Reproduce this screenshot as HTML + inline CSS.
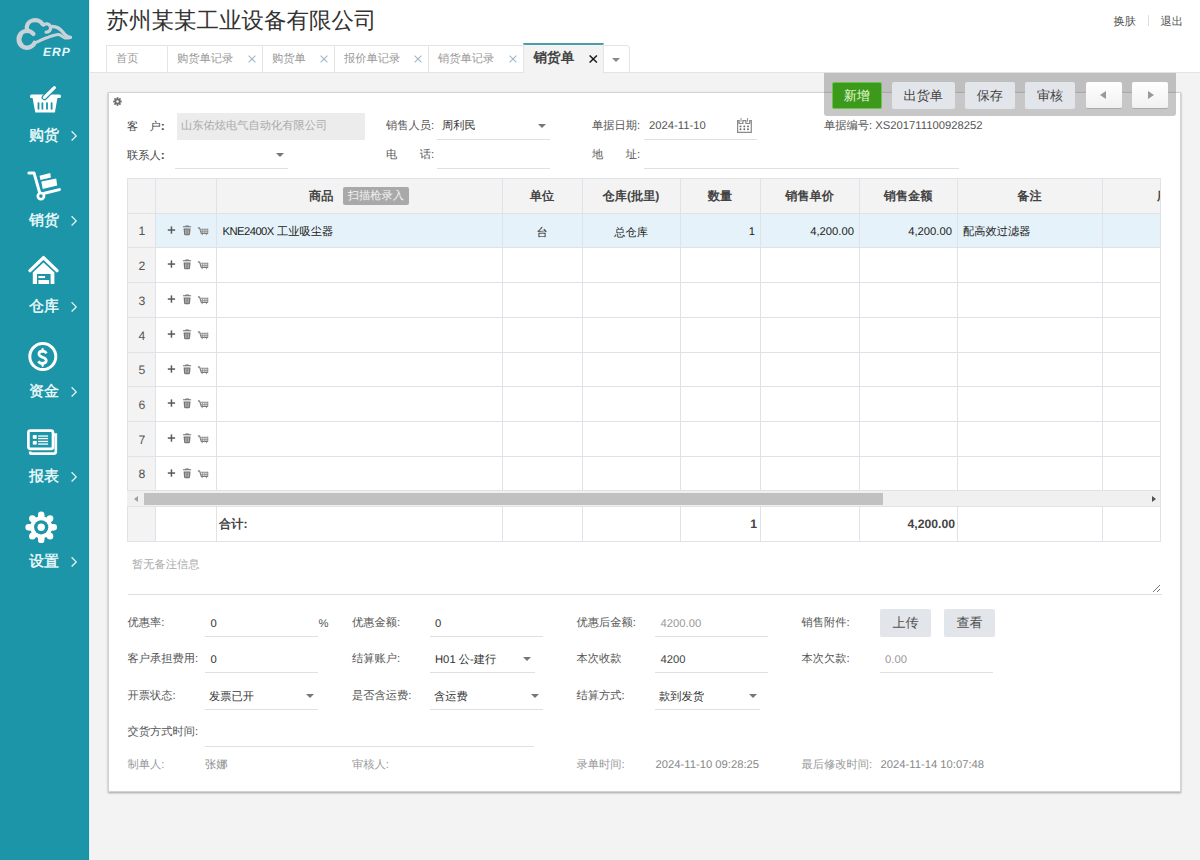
<!DOCTYPE html>
<html><head><meta charset="utf-8">
<style>
*{box-sizing:border-box;margin:0;padding:0}
html,body{width:1200px;height:860px;overflow:hidden}
body{text-rendering:geometricPrecision;position:relative;background:#f3f3f3;font-family:"Liberation Sans",sans-serif;font-size:11.25px;color:#333}
.a{position:absolute;white-space:nowrap}
#side{left:0;top:0;width:89px;height:860px;background:#1b95a7}
.mi{position:absolute;left:0;width:89px;color:#fff;font-size:15px}
.mi .lb{position:absolute;left:29px;line-height:16px;-webkit-text-stroke:0.35px #f4feff;color:#f4feff}
.mi .ar{position:absolute;left:70px;top:2px}
#hdr{left:89px;top:0;width:1111px;height:72px;background:#fff}
.tab{position:absolute;top:45px;height:27px;border:1px solid #e4e4e4;border-bottom:none;background:#fff;color:#999;font-size:11.25px;line-height:26px;padding-left:9px}
.tab .x{position:absolute;right:6.5px;top:8.5px}
#panel{left:108px;top:92px;width:1073px;height:700px;background:#fff;border:1px solid #d2d2d2;box-shadow:0 1px 2px rgba(0,0,0,.18)}
.lbl{position:absolute;color:#555;font-size:11.25px;line-height:14px}
.val{position:absolute;color:#333;font-size:11.25px;line-height:14px}
.ul{position:absolute;height:1px;background:#dde1e4}
.dd{position:absolute;width:0;height:0;border-left:4px solid transparent;border-right:4px solid transparent;border-top:4px solid #777}
.th{font-size:12.2px;font-weight:bold;color:#444;line-height:16px}
.td{font-size:11.25px;line-height:14px}
</style></head><body>

<div class="a" style="left:89px;top:0;width:1px;height:860px;background:#d2f7fb;z-index:2"></div>
<div id="side" class="a">
<div class="a" style="left:88px;top:0;width:1px;height:860px;background:#288b97"></div>
<svg width="89" height="600" viewBox="0 0 89 600" style="position:absolute;left:0;top:0">
 <g fill="none" stroke="#c8d2d8" stroke-linecap="round">
  <path d="M33.4,33.9 A8.4,8.4 0 1 0 34.6,42.85" stroke-width="4.3"/>
  <path d="M20.5,35 A8.4,8.4 0 0 0 21.5,45" stroke-width="4.6"/>
  <path d="M34.6,42.85 C40,41 44,38 48.4,37.2 C53,35.5 56,34.4 58.5,34.6 C61,34.8 63,37.6 65,37.9 C67,38.2 68.8,38 70.4,37.3" stroke-width="3"/>
  <path d="M27.2,29.4 A8.3,7.1 0 0 1 42.5,24.0" stroke-width="4.2"/>
  <path d="M42.3,24.2 L43.5,25.0 A4.2,4.2 0 1 1 46.1,32.2" stroke-width="3.3"/>
  <path d="M50.6,26.6 C55.5,26 60,28.5 62.8,32 C64.5,34.5 66.5,37 70.4,37.3" stroke-width="3.3"/>
 </g>
 <text x="43" y="55.6" font-family="Liberation Sans" font-style="italic" font-weight="bold" font-size="12" letter-spacing="1.1" fill="#e8faff">ERP</text>
 <!-- basket -->
 <g fill="#fff">
  <rect x="30" y="94.6" width="31" height="3.4" rx="1.5"/>
  <path d="M32.6,97.9 L57.4,97.9 L54.9,112.6 L35.3,112.6 Z"/>
 </g>
 <g fill="#1b95a7">
  <rect x="37.6" y="102.3" width="1.8" height="7.5" rx=".8"/>
  <rect x="41.5" y="102.3" width="1.8" height="7.5" rx=".8"/>
  <rect x="46.1" y="102.3" width="1.8" height="7.5" rx=".8"/>
  <rect x="50.7" y="102.3" width="1.8" height="7.5" rx=".8"/>
 </g>
 <line x1="44.4" y1="97.4" x2="54.4" y2="87.6" stroke="#1b95a7" stroke-width="5.6" stroke-linecap="round"/>
 <line x1="44.4" y1="97.4" x2="54.4" y2="87.6" stroke="#fff" stroke-width="3.2" stroke-linecap="round"/>
 <!-- cart -->
 <g fill="none" stroke="#fff" stroke-width="3" stroke-linecap="round" stroke-linejoin="round">
  <path d="M28.9,172.9 L34,172.9 L39.6,192.4"/>
  <path d="M44.4,193.3 L59.4,189.6"/>
  <circle cx="40.9" cy="196.1" r="3.1" stroke-width="2.6"/>
 </g>
 <g fill="#fff">
  <path d="M41.3,181.6 L56.2,178.4 L57.2,185.5 L42.7,189.1 Z"/>
  <path d="M39.5,175.7 L50.2,173.1 L50.9,177.6 L40.5,179.9 Z"/>
 </g>
 <!-- house -->
 <path d="M30,270.6 L43.5,257.6 L57,270.6" fill="none" stroke="#fff" stroke-width="3.4" stroke-linecap="round" stroke-linejoin="round"/>
 <path d="M32.8,272.4 L43.5,262.6 L54.4,272.4 L54.4,284 L50.6,284 L50.6,274 L37,274 L37,284 L32.8,284 Z" fill="#fff"/>
 <rect x="38.4" y="276" width="6.7" height="2.1" fill="#fff"/>
 <rect x="38.4" y="280" width="10.7" height="4" fill="#fff"/>
 <!-- dollar -->
 <circle cx="42.8" cy="356.6" r="13" fill="none" stroke="#fff" stroke-width="3"/>
 <path d="M46.4,353.4 C45.6,351.9 44,351.2 42.5,351.2 C40.3,351.2 38.9,352.5 38.9,354.1 C38.9,356 40.8,356.6 42.5,357.2 C44.5,357.8 46.3,358.6 46.3,360.6 C46.3,362.3 44.7,363.4 42.5,363.4 C40.8,363.4 39.3,362.7 38.4,361.2" fill="none" stroke="#fff" stroke-width="2.7"/><path d="M42.6,349.2 L42.6,351.6 M42.6,363 L42.6,365.8" stroke="#fff" stroke-width="2.3" stroke-linecap="round"/>
 <!-- report -->
 <path d="M54,434.6 L55.8,434.6 L55.8,451.8 Q55.8,453.6 54,453.6 L31.6,453.6 Q30.2,453.6 30.2,452.4 L30.2,451.6" fill="none" stroke="#fff" stroke-width="2.7"/>
 <rect x="28.4" y="430.6" width="24.6" height="18.2" rx="2" fill="#1b95a7" stroke="#fff" stroke-width="2.7"/>
 <g fill="#fff">
  <rect x="32.8" y="435.1" width="3.9" height="3.7"/>
  <rect x="32.8" y="440.9" width="3.9" height="3.7"/>
  <rect x="38.1" y="435.4" width="10" height="1.3"/>
  <rect x="38.1" y="437.9" width="10" height="1.3"/>
  <rect x="38.1" y="440.8" width="10" height="1.3"/>
  <rect x="38.1" y="443.4" width="10" height="1.3"/>
 </g>
 <!-- gear -->
 <g transform="translate(41.2,527.3)">
  <circle r="11" fill="#fff"/>
  <g fill="#fff">
   <circle cx="0" cy="-12.6" r="3.2"/><circle cx="0" cy="12.6" r="3.2"/>
   <circle cx="12.6" cy="0" r="3.2"/><circle cx="-12.6" cy="0" r="3.2"/>
   <circle cx="8.9" cy="8.9" r="3.2"/><circle cx="-8.9" cy="8.9" r="3.2"/>
   <circle cx="8.9" cy="-8.9" r="3.2"/><circle cx="-8.9" cy="-8.9" r="3.2"/>
   <rect x="-3.2" y="-12.6" width="6.4" height="25.2"/>
   <rect x="-12.6" y="-3.2" width="25.2" height="6.4"/>
   <rect x="-3.2" y="-12.6" width="6.4" height="25.2" transform="rotate(45)"/>
   <rect x="-3.2" y="-12.6" width="6.4" height="25.2" transform="rotate(-45)"/>
  </g>
  <circle r="7.1" fill="#1b95a7"/>
  <circle r="3.7" fill="#fff"/>
 </g>
</svg>
<div class="mi" style="top:128px"><span class="lb">购货</span><svg class="ar" width="9" height="12" viewBox="0 0 9 12"><path d="M1.6,1.3 L6.2,5.9 L1.6,10.5" fill="none" stroke="#e8f6f8" stroke-width="1.25"/></svg></div>
<div class="mi" style="top:213px"><span class="lb">销货</span><svg class="ar" width="9" height="12" viewBox="0 0 9 12"><path d="M1.6,1.3 L6.2,5.9 L1.6,10.5" fill="none" stroke="#e8f6f8" stroke-width="1.25"/></svg></div>
<div class="mi" style="top:299px"><span class="lb">仓库</span><svg class="ar" width="9" height="12" viewBox="0 0 9 12"><path d="M1.6,1.3 L6.2,5.9 L1.6,10.5" fill="none" stroke="#e8f6f8" stroke-width="1.25"/></svg></div>
<div class="mi" style="top:384px"><span class="lb">资金</span><svg class="ar" width="9" height="12" viewBox="0 0 9 12"><path d="M1.6,1.3 L6.2,5.9 L1.6,10.5" fill="none" stroke="#e8f6f8" stroke-width="1.25"/></svg></div>
<div class="mi" style="top:469px"><span class="lb">报表</span><svg class="ar" width="9" height="12" viewBox="0 0 9 12"><path d="M1.6,1.3 L6.2,5.9 L1.6,10.5" fill="none" stroke="#e8f6f8" stroke-width="1.25"/></svg></div>
<div class="mi" style="top:554px"><span class="lb">设置</span><svg class="ar" width="9" height="12" viewBox="0 0 9 12"><path d="M1.6,1.3 L6.2,5.9 L1.6,10.5" fill="none" stroke="#e8f6f8" stroke-width="1.25"/></svg></div>
</div>
<div class="a" style="left:89px;top:72px;width:1111px;height:1px;background:#e3e3e3"></div>
<div id="hdr" class="a">
<div class="a" style="left:17.5px;top:6px;font-size:22.5px;line-height:30px;color:#333">苏州某某工业设备有限公司</div>
<div class="a" style="left:1024.5px;top:13.7px;font-size:11.25px;line-height:16px;color:#555">换肤</div>
<div class="a" style="left:1059px;top:15px;width:1px;height:11px;background:#ddd"></div>
<div class="a" style="left:1071.5px;top:13.7px;font-size:11.25px;line-height:16px;color:#555">退出</div>
</div>
<div class="tab" style="left:106px;width:62px">首页</div>
<div class="tab" style="left:167px;width:96px">购货单记录<svg class="x" width="8" height="8" viewBox="0 0 8 8"><path d="M0.6,0.6 L7.4,7.4 M7.4,0.6 L0.6,7.4" stroke="#a2b9cd" stroke-width="1.15"/></svg></div>
<div class="tab" style="left:262px;width:73px">购货单<svg class="x" width="8" height="8" viewBox="0 0 8 8"><path d="M0.6,0.6 L7.4,7.4 M7.4,0.6 L0.6,7.4" stroke="#a2b9cd" stroke-width="1.15"/></svg></div>
<div class="tab" style="left:334px;width:95px">报价单记录<svg class="x" width="8" height="8" viewBox="0 0 8 8"><path d="M0.6,0.6 L7.4,7.4 M7.4,0.6 L0.6,7.4" stroke="#a2b9cd" stroke-width="1.15"/></svg></div>
<div class="tab" style="left:428px;width:96px">销货单记录<svg class="x" width="8" height="8" viewBox="0 0 8 8"><path d="M0.6,0.6 L7.4,7.4 M7.4,0.6 L0.6,7.4" stroke="#a2b9cd" stroke-width="1.15"/></svg></div>
<div class="tab" style="left:603px;width:27px;border-top-right-radius:4px"><span class="dd" style="left:8px;top:12px;border-top-color:#888;border-left-width:4px;border-right-width:4px;border-top-width:4px"></span></div>
<div class="tab" style="left:523px;top:43px;height:30px;width:81px;background:#f3f3f3;border:none;border-top:2px solid #4a9fab;border-left:1px solid #e4e4e4;border-right:1px solid #e4e4e4;color:#444;font-weight:bold;font-size:13.6px;line-height:26px;padding-left:9.5px">销货单<svg class="x" style="right:5.5px;top:9.5px" width="8.5" height="8" viewBox="0 0 8.5 8"><path d="M0.6,0.5 L7.9,7.5 M7.9,0.5 L0.6,7.5" stroke="#1e1e1e" stroke-width="1.5"/></svg></div>


<div id="panel" class="a"></div>
<div id="panel" class="a"></div>
<!-- gear small -->
<svg class="a" style="left:113px;top:97px" width="9" height="9" viewBox="-4.5 -4.5 9 9"><g fill="#707070"><circle r="3"/><rect x="-0.9" y="-4.3" width="1.8" height="8.6"/><rect x="-0.9" y="-4.3" width="1.8" height="8.6" transform="rotate(45)"/><rect x="-0.9" y="-4.3" width="1.8" height="8.6" transform="rotate(90)"/><rect x="-0.9" y="-4.3" width="1.8" height="8.6" transform="rotate(135)"/></g><circle r="1.2" fill="#fff"/></svg>
<!-- toolbar -->
<div class="a" style="left:824px;top:73px;width:352px;height:43px;background:rgba(100,100,100,0.36);border-radius:0 0 3px 3px"></div>
<div class="a btn" style="left:831.5px;top:81.5px;width:50.5px;height:27.5px;background:#3b9a1c;border:1px solid #6fc24f;color:#e9f9d8;font-size:13.1px;line-height:25px;text-align:center;border-radius:2px">新增</div>
<div class="a btn" style="left:891.5px;top:81.5px;width:63.5px;height:27.5px;background:#e2e5e9;color:#444;font-size:13.1px;line-height:27px;text-align:center;border-radius:2px">出货单</div>
<div class="a btn" style="left:964.5px;top:81.5px;width:50.5px;height:27.5px;background:#e2e5e9;color:#444;font-size:13.1px;line-height:27px;text-align:center;border-radius:2px">保存</div>
<div class="a btn" style="left:1025px;top:81.5px;width:50px;height:27.5px;background:#e2e5e9;color:#444;font-size:13.1px;line-height:27px;text-align:center;border-radius:2px">审核</div>
<div class="a btn" style="left:1085.5px;top:81.5px;width:36px;height:27px;background:linear-gradient(#fff,#f1f1f1);border-bottom:1px solid #aaa;border-radius:2px"><span class="a" style="left:14px;top:9px;width:0;height:0;border-top:4.5px solid transparent;border-bottom:4.5px solid transparent;border-right:6px solid #999"></span></div>
<div class="a btn" style="left:1132px;top:81.5px;width:36px;height:27px;background:linear-gradient(#fff,#f1f1f1);border-bottom:1px solid #aaa;border-radius:2px"><span class="a" style="left:16px;top:9px;width:0;height:0;border-top:4.5px solid transparent;border-bottom:4.5px solid transparent;border-left:6px solid #999"></span></div>

<!-- header form -->
<div class="lbl" style="left:127px;top:119px;color:#444">客&#x3000;户<b style="font-size:12px">:</b></div>
<div class="a" style="left:177px;top:112.5px;width:188px;height:27px;background:#ececec;color:#aaa;font-size:11.25px;line-height:27px;padding-left:4px">山东佑炫电气自动化有限公司</div>
<div class="lbl" style="left:127px;top:148px;color:#444">联系人<b style="font-size:12px">:</b></div>
<div class="ul" style="left:175px;top:167.5px;width:113px"></div>
<div class="dd" style="left:276px;top:152.5px"></div>

<div class="lbl" style="left:386px;top:119px">销售人员:</div>
<div class="val" style="left:442px;top:119px">周利民</div>
<div class="ul" style="left:436.5px;top:139px;width:113px"></div>
<div class="dd" style="left:538px;top:123.5px"></div>
<div class="lbl" style="left:386px;top:148px">电&#x3000;&#x3000;话:</div>
<div class="ul" style="left:436.5px;top:168px;width:113px"></div>

<div class="lbl" style="left:592px;top:119px">单据日期:</div>
<div class="val" style="left:649px;top:119px;color:#555">2024-11-10</div>
<div class="ul" style="left:643.5px;top:139px;width:113px"></div>
<div class="lbl" style="left:592px;top:148px">地&#x3000;&#x3000;址:</div>
<div class="ul" style="left:643.5px;top:168px;width:315px"></div>
<svg class="a" style="left:736px;top:117px" width="17" height="17" viewBox="0 0 17 17"><path d="M1.6,3.7 L3.1,3.7 L3.1,6.5 L6.9,6.5 L6.9,3.7 L9.9,3.7 L9.9,6.5 L13.7,6.5 L13.7,3.7 L15.3,3.7 L15.3,15.3 L1.6,15.3 Z" fill="none" stroke="#8a8a8a" stroke-width="1.2"/><g stroke="#999" stroke-width="1.1"><line x1="5" y1="1" x2="5" y2="4.8"/><line x1="11.5" y1="1" x2="11.5" y2="4.8"/></g><g fill="#666"><circle cx="4.5" cy="9.4" r=".95"/><circle cx="8.3" cy="9.4" r=".95"/><circle cx="12" cy="9.4" r=".95"/><circle cx="4.5" cy="12.3" r=".95"/><circle cx="8.3" cy="12.3" r=".95"/><circle cx="12" cy="12.3" r=".95"/></g></svg>
<div class="lbl" style="left:824px;top:119px">单据编号: XS201711100928252</div>


<!-- table -->
<div class="a" style="left:127px;top:178px;width:1033px;height:35px;background:#f3f3f3"></div>
<div class="a" style="left:127px;top:213px;width:28px;height:328px;background:#f3f3f3"></div>
<div class="a" style="left:155px;top:213px;width:1005px;height:34px;background:#e6f2f9"></div>
<div class="a" style="left:127px;top:490px;width:1033px;height:16px;background:#f0f0f0"></div>
<div class="a" style="left:144px;top:493px;width:738.5px;height:12px;background:#c1c1c1"></div>
<div class="a" style="left:134px;top:495.5px;width:0;height:0;border-top:3.6px solid transparent;border-bottom:3.6px solid transparent;border-right:4.2px solid #a0a0a0"></div>
<div class="a" style="left:1151.5px;top:495.5px;width:0;height:0;border-top:3.6px solid transparent;border-bottom:3.6px solid transparent;border-left:4.2px solid #505050"></div>
<div class="a" style="left:127px;top:178px;width:1033px;height:1px;background:#dfe2e6"></div>
<div class="a" style="left:127px;top:213px;width:1033px;height:1px;background:#dfe2e6"></div>
<div class="a" style="left:127px;top:247px;width:1033px;height:1px;background:#dfe2e6"></div>
<div class="a" style="left:127px;top:282px;width:1033px;height:1px;background:#dfe2e6"></div>
<div class="a" style="left:127px;top:317px;width:1033px;height:1px;background:#dfe2e6"></div>
<div class="a" style="left:127px;top:352px;width:1033px;height:1px;background:#dfe2e6"></div>
<div class="a" style="left:127px;top:386px;width:1033px;height:1px;background:#dfe2e6"></div>
<div class="a" style="left:127px;top:421px;width:1033px;height:1px;background:#dfe2e6"></div>
<div class="a" style="left:127px;top:456px;width:1033px;height:1px;background:#dfe2e6"></div>
<div class="a" style="left:127px;top:490px;width:1033px;height:1px;background:#dfe2e6"></div>
<div class="a" style="left:127px;top:506px;width:1033px;height:1px;background:#dfe2e6"></div>
<div class="a" style="left:127px;top:541px;width:1033px;height:1px;background:#dfe2e6"></div>
<div class="a" style="left:127px;top:178px;width:1px;height:312px;background:#dfe2e6"></div>
<div class="a" style="left:127px;top:506px;width:1px;height:35px;background:#dfe2e6"></div>
<div class="a" style="left:155px;top:178px;width:1px;height:312px;background:#dfe2e6"></div>
<div class="a" style="left:155px;top:506px;width:1px;height:35px;background:#dfe2e6"></div>
<div class="a" style="left:216px;top:178px;width:1px;height:312px;background:#dfe2e6"></div>
<div class="a" style="left:216px;top:506px;width:1px;height:35px;background:#dfe2e6"></div>
<div class="a" style="left:502px;top:178px;width:1px;height:312px;background:#dfe2e6"></div>
<div class="a" style="left:502px;top:506px;width:1px;height:35px;background:#dfe2e6"></div>
<div class="a" style="left:582px;top:178px;width:1px;height:312px;background:#dfe2e6"></div>
<div class="a" style="left:582px;top:506px;width:1px;height:35px;background:#dfe2e6"></div>
<div class="a" style="left:680px;top:178px;width:1px;height:312px;background:#dfe2e6"></div>
<div class="a" style="left:680px;top:506px;width:1px;height:35px;background:#dfe2e6"></div>
<div class="a" style="left:760px;top:178px;width:1px;height:312px;background:#dfe2e6"></div>
<div class="a" style="left:760px;top:506px;width:1px;height:35px;background:#dfe2e6"></div>
<div class="a" style="left:859px;top:178px;width:1px;height:312px;background:#dfe2e6"></div>
<div class="a" style="left:859px;top:506px;width:1px;height:35px;background:#dfe2e6"></div>
<div class="a" style="left:957px;top:178px;width:1px;height:312px;background:#dfe2e6"></div>
<div class="a" style="left:957px;top:506px;width:1px;height:35px;background:#dfe2e6"></div>
<div class="a" style="left:1102px;top:178px;width:1px;height:312px;background:#dfe2e6"></div>
<div class="a" style="left:1102px;top:506px;width:1px;height:35px;background:#dfe2e6"></div>
<div class="a" style="left:1160px;top:178px;width:1px;height:364px;background:#dfe2e6"></div>
<div class="a th" style="left:309px;top:188px">商品</div>
<div class="a" style="left:343px;top:187px;width:65.5px;height:18px;background:#a9a9a9;border-radius:2px;color:#f2f2f2;font-size:11.25px;line-height:18px;text-align:center">扫描枪录入</div>
<div class="a th" style="left:502px;top:188px;width:80px;text-align:center;">单位</div>
<div class="a th" style="left:582px;top:188px;width:98px;text-align:center;">仓库(批里)</div>
<div class="a th" style="left:680px;top:188px;width:80px;text-align:center;">数量</div>
<div class="a th" style="left:760px;top:188px;width:99px;text-align:center;">销售单价</div>
<div class="a th" style="left:859px;top:188px;width:98px;text-align:center;">销售金额</div>
<div class="a th" style="left:957px;top:188px;width:145px;text-align:center;">备注</div>
<div class="a" style="left:1102px;top:178px;width:58px;height:35px;overflow:hidden"><div class="a th" style="left:55px;top:10px">序</div></div>
<div class="a td" style="left:128px;top:224.0px;width:28px;text-align:center;color:#555;font-size:12.2px">1</div>
<svg class="a" style="left:167px;top:224.5px" width="44" height="12" viewBox="0 0 44 12"><g fill="#5a5a5a"><rect x="0.8" y="4.3" width="7.3" height="1.5"/><rect x="3.7" y="1.4" width="1.5" height="7.3"/></g><g fill="#6e6e6e"><rect x="15.9" y="1.3" width="8.3" height="1" rx=".4"/><rect x="18.2" y="0.5" width="3.8" height="1" rx=".4"/><path d="M16.6,3.5 L23.5,3.5 L23,9.2 Q22.8,10.2 21.8,10.2 L18.3,10.2 Q17.3,10.2 17.1,9.2 Z"/></g><rect x="17.9" y="4.4" width="4.3" height="4.8" fill="#a8a8a8"/><rect x="19.6" y="4.4" width="0.9" height="4.8" fill="#7a7a7a"/><path d="M30.9,2.9 L32.6,3.1 L34.3,8.4 L41.1,8.4" fill="none" stroke="#7a7a7a" stroke-width="1.1"/><g fill="#8c8c8c"><rect x="33.4" y="3.8" width="7.8" height="0.9"/><rect x="33.8" y="5.8" width="7.4" height="0.9"/><rect x="35.3" y="3.8" width="0.8" height="4.6"/><rect x="37.5" y="3.8" width="0.8" height="4.6"/><rect x="39.7" y="3.8" width="0.8" height="4.6"/><rect x="40.5" y="3.8" width="0.7" height="4.6"/><circle cx="35.2" cy="9.6" r=".65"/><circle cx="39.4" cy="9.6" r=".65"/></g></svg>
<div class="a td" style="left:128px;top:258.5px;width:28px;text-align:center;color:#555;font-size:12.2px">2</div>
<svg class="a" style="left:167px;top:259.0px" width="44" height="12" viewBox="0 0 44 12"><g fill="#5a5a5a"><rect x="0.8" y="4.3" width="7.3" height="1.5"/><rect x="3.7" y="1.4" width="1.5" height="7.3"/></g><g fill="#6e6e6e"><rect x="15.9" y="1.3" width="8.3" height="1" rx=".4"/><rect x="18.2" y="0.5" width="3.8" height="1" rx=".4"/><path d="M16.6,3.5 L23.5,3.5 L23,9.2 Q22.8,10.2 21.8,10.2 L18.3,10.2 Q17.3,10.2 17.1,9.2 Z"/></g><rect x="17.9" y="4.4" width="4.3" height="4.8" fill="#a8a8a8"/><rect x="19.6" y="4.4" width="0.9" height="4.8" fill="#7a7a7a"/><path d="M30.9,2.9 L32.6,3.1 L34.3,8.4 L41.1,8.4" fill="none" stroke="#7a7a7a" stroke-width="1.1"/><g fill="#8c8c8c"><rect x="33.4" y="3.8" width="7.8" height="0.9"/><rect x="33.8" y="5.8" width="7.4" height="0.9"/><rect x="35.3" y="3.8" width="0.8" height="4.6"/><rect x="37.5" y="3.8" width="0.8" height="4.6"/><rect x="39.7" y="3.8" width="0.8" height="4.6"/><rect x="40.5" y="3.8" width="0.7" height="4.6"/><circle cx="35.2" cy="9.6" r=".65"/><circle cx="39.4" cy="9.6" r=".65"/></g></svg>
<div class="a td" style="left:128px;top:293.5px;width:28px;text-align:center;color:#555;font-size:12.2px">3</div>
<svg class="a" style="left:167px;top:294.0px" width="44" height="12" viewBox="0 0 44 12"><g fill="#5a5a5a"><rect x="0.8" y="4.3" width="7.3" height="1.5"/><rect x="3.7" y="1.4" width="1.5" height="7.3"/></g><g fill="#6e6e6e"><rect x="15.9" y="1.3" width="8.3" height="1" rx=".4"/><rect x="18.2" y="0.5" width="3.8" height="1" rx=".4"/><path d="M16.6,3.5 L23.5,3.5 L23,9.2 Q22.8,10.2 21.8,10.2 L18.3,10.2 Q17.3,10.2 17.1,9.2 Z"/></g><rect x="17.9" y="4.4" width="4.3" height="4.8" fill="#a8a8a8"/><rect x="19.6" y="4.4" width="0.9" height="4.8" fill="#7a7a7a"/><path d="M30.9,2.9 L32.6,3.1 L34.3,8.4 L41.1,8.4" fill="none" stroke="#7a7a7a" stroke-width="1.1"/><g fill="#8c8c8c"><rect x="33.4" y="3.8" width="7.8" height="0.9"/><rect x="33.8" y="5.8" width="7.4" height="0.9"/><rect x="35.3" y="3.8" width="0.8" height="4.6"/><rect x="37.5" y="3.8" width="0.8" height="4.6"/><rect x="39.7" y="3.8" width="0.8" height="4.6"/><rect x="40.5" y="3.8" width="0.7" height="4.6"/><circle cx="35.2" cy="9.6" r=".65"/><circle cx="39.4" cy="9.6" r=".65"/></g></svg>
<div class="a td" style="left:128px;top:328.5px;width:28px;text-align:center;color:#555;font-size:12.2px">4</div>
<svg class="a" style="left:167px;top:329.0px" width="44" height="12" viewBox="0 0 44 12"><g fill="#5a5a5a"><rect x="0.8" y="4.3" width="7.3" height="1.5"/><rect x="3.7" y="1.4" width="1.5" height="7.3"/></g><g fill="#6e6e6e"><rect x="15.9" y="1.3" width="8.3" height="1" rx=".4"/><rect x="18.2" y="0.5" width="3.8" height="1" rx=".4"/><path d="M16.6,3.5 L23.5,3.5 L23,9.2 Q22.8,10.2 21.8,10.2 L18.3,10.2 Q17.3,10.2 17.1,9.2 Z"/></g><rect x="17.9" y="4.4" width="4.3" height="4.8" fill="#a8a8a8"/><rect x="19.6" y="4.4" width="0.9" height="4.8" fill="#7a7a7a"/><path d="M30.9,2.9 L32.6,3.1 L34.3,8.4 L41.1,8.4" fill="none" stroke="#7a7a7a" stroke-width="1.1"/><g fill="#8c8c8c"><rect x="33.4" y="3.8" width="7.8" height="0.9"/><rect x="33.8" y="5.8" width="7.4" height="0.9"/><rect x="35.3" y="3.8" width="0.8" height="4.6"/><rect x="37.5" y="3.8" width="0.8" height="4.6"/><rect x="39.7" y="3.8" width="0.8" height="4.6"/><rect x="40.5" y="3.8" width="0.7" height="4.6"/><circle cx="35.2" cy="9.6" r=".65"/><circle cx="39.4" cy="9.6" r=".65"/></g></svg>
<div class="a td" style="left:128px;top:363.0px;width:28px;text-align:center;color:#555;font-size:12.2px">5</div>
<svg class="a" style="left:167px;top:363.5px" width="44" height="12" viewBox="0 0 44 12"><g fill="#5a5a5a"><rect x="0.8" y="4.3" width="7.3" height="1.5"/><rect x="3.7" y="1.4" width="1.5" height="7.3"/></g><g fill="#6e6e6e"><rect x="15.9" y="1.3" width="8.3" height="1" rx=".4"/><rect x="18.2" y="0.5" width="3.8" height="1" rx=".4"/><path d="M16.6,3.5 L23.5,3.5 L23,9.2 Q22.8,10.2 21.8,10.2 L18.3,10.2 Q17.3,10.2 17.1,9.2 Z"/></g><rect x="17.9" y="4.4" width="4.3" height="4.8" fill="#a8a8a8"/><rect x="19.6" y="4.4" width="0.9" height="4.8" fill="#7a7a7a"/><path d="M30.9,2.9 L32.6,3.1 L34.3,8.4 L41.1,8.4" fill="none" stroke="#7a7a7a" stroke-width="1.1"/><g fill="#8c8c8c"><rect x="33.4" y="3.8" width="7.8" height="0.9"/><rect x="33.8" y="5.8" width="7.4" height="0.9"/><rect x="35.3" y="3.8" width="0.8" height="4.6"/><rect x="37.5" y="3.8" width="0.8" height="4.6"/><rect x="39.7" y="3.8" width="0.8" height="4.6"/><rect x="40.5" y="3.8" width="0.7" height="4.6"/><circle cx="35.2" cy="9.6" r=".65"/><circle cx="39.4" cy="9.6" r=".65"/></g></svg>
<div class="a td" style="left:128px;top:397.5px;width:28px;text-align:center;color:#555;font-size:12.2px">6</div>
<svg class="a" style="left:167px;top:398.0px" width="44" height="12" viewBox="0 0 44 12"><g fill="#5a5a5a"><rect x="0.8" y="4.3" width="7.3" height="1.5"/><rect x="3.7" y="1.4" width="1.5" height="7.3"/></g><g fill="#6e6e6e"><rect x="15.9" y="1.3" width="8.3" height="1" rx=".4"/><rect x="18.2" y="0.5" width="3.8" height="1" rx=".4"/><path d="M16.6,3.5 L23.5,3.5 L23,9.2 Q22.8,10.2 21.8,10.2 L18.3,10.2 Q17.3,10.2 17.1,9.2 Z"/></g><rect x="17.9" y="4.4" width="4.3" height="4.8" fill="#a8a8a8"/><rect x="19.6" y="4.4" width="0.9" height="4.8" fill="#7a7a7a"/><path d="M30.9,2.9 L32.6,3.1 L34.3,8.4 L41.1,8.4" fill="none" stroke="#7a7a7a" stroke-width="1.1"/><g fill="#8c8c8c"><rect x="33.4" y="3.8" width="7.8" height="0.9"/><rect x="33.8" y="5.8" width="7.4" height="0.9"/><rect x="35.3" y="3.8" width="0.8" height="4.6"/><rect x="37.5" y="3.8" width="0.8" height="4.6"/><rect x="39.7" y="3.8" width="0.8" height="4.6"/><rect x="40.5" y="3.8" width="0.7" height="4.6"/><circle cx="35.2" cy="9.6" r=".65"/><circle cx="39.4" cy="9.6" r=".65"/></g></svg>
<div class="a td" style="left:128px;top:432.5px;width:28px;text-align:center;color:#555;font-size:12.2px">7</div>
<svg class="a" style="left:167px;top:433.0px" width="44" height="12" viewBox="0 0 44 12"><g fill="#5a5a5a"><rect x="0.8" y="4.3" width="7.3" height="1.5"/><rect x="3.7" y="1.4" width="1.5" height="7.3"/></g><g fill="#6e6e6e"><rect x="15.9" y="1.3" width="8.3" height="1" rx=".4"/><rect x="18.2" y="0.5" width="3.8" height="1" rx=".4"/><path d="M16.6,3.5 L23.5,3.5 L23,9.2 Q22.8,10.2 21.8,10.2 L18.3,10.2 Q17.3,10.2 17.1,9.2 Z"/></g><rect x="17.9" y="4.4" width="4.3" height="4.8" fill="#a8a8a8"/><rect x="19.6" y="4.4" width="0.9" height="4.8" fill="#7a7a7a"/><path d="M30.9,2.9 L32.6,3.1 L34.3,8.4 L41.1,8.4" fill="none" stroke="#7a7a7a" stroke-width="1.1"/><g fill="#8c8c8c"><rect x="33.4" y="3.8" width="7.8" height="0.9"/><rect x="33.8" y="5.8" width="7.4" height="0.9"/><rect x="35.3" y="3.8" width="0.8" height="4.6"/><rect x="37.5" y="3.8" width="0.8" height="4.6"/><rect x="39.7" y="3.8" width="0.8" height="4.6"/><rect x="40.5" y="3.8" width="0.7" height="4.6"/><circle cx="35.2" cy="9.6" r=".65"/><circle cx="39.4" cy="9.6" r=".65"/></g></svg>
<div class="a td" style="left:128px;top:467.0px;width:28px;text-align:center;color:#555;font-size:12.2px">8</div>
<svg class="a" style="left:167px;top:467.5px" width="44" height="12" viewBox="0 0 44 12"><g fill="#5a5a5a"><rect x="0.8" y="4.3" width="7.3" height="1.5"/><rect x="3.7" y="1.4" width="1.5" height="7.3"/></g><g fill="#6e6e6e"><rect x="15.9" y="1.3" width="8.3" height="1" rx=".4"/><rect x="18.2" y="0.5" width="3.8" height="1" rx=".4"/><path d="M16.6,3.5 L23.5,3.5 L23,9.2 Q22.8,10.2 21.8,10.2 L18.3,10.2 Q17.3,10.2 17.1,9.2 Z"/></g><rect x="17.9" y="4.4" width="4.3" height="4.8" fill="#a8a8a8"/><rect x="19.6" y="4.4" width="0.9" height="4.8" fill="#7a7a7a"/><path d="M30.9,2.9 L32.6,3.1 L34.3,8.4 L41.1,8.4" fill="none" stroke="#7a7a7a" stroke-width="1.1"/><g fill="#8c8c8c"><rect x="33.4" y="3.8" width="7.8" height="0.9"/><rect x="33.8" y="5.8" width="7.4" height="0.9"/><rect x="35.3" y="3.8" width="0.8" height="4.6"/><rect x="37.5" y="3.8" width="0.8" height="4.6"/><rect x="39.7" y="3.8" width="0.8" height="4.6"/><rect x="40.5" y="3.8" width="0.7" height="4.6"/><circle cx="35.2" cy="9.6" r=".65"/><circle cx="39.4" cy="9.6" r=".65"/></g></svg>
<div class="a td" style="left:222.5px;top:224.5px;color:#222"><span style="letter-spacing:-0.55px">KNE2400X</span> 工业吸尘器</div>
<div class="a th" style="left:502px;top:224.5px;width:80px;text-align:center;font-weight:normal;color:#222;font-size:11.25px">台</div>
<div class="a th" style="left:582px;top:224.5px;width:98px;text-align:center;font-weight:normal;color:#222;font-size:11.25px">总仓库</div>
<div class="a td" style="left:680px;top:224.5px;width:75px;text-align:right;color:#222">1</div>
<div class="a td" style="left:760px;top:224.5px;width:94px;text-align:right;color:#222">4,200.00</div>
<div class="a td" style="left:859px;top:224.5px;width:93px;text-align:right;color:#222">4,200.00</div>
<div class="a td" style="left:963px;top:224.5px;color:#222">配高效过滤器</div>
<div class="a th" style="left:219px;top:516.5px;line-height:14px">合计:</div>
<div class="a th" style="left:680px;top:516.5px;width:77px;text-align:right;line-height:14px">1</div>
<div class="a th" style="left:859px;top:516.5px;width:96px;text-align:right;line-height:14px">4,200.00</div>
<!-- bottom form -->
<div class="a" style="left:132px;top:557.5px;color:#aaa;font-size:11.25px;line-height:14px">暂无备注信息</div>
<div class="ul" style="left:127.5px;top:594px;width:1034px;background:#dcdfe2"></div>
<svg class="a" style="left:1151px;top:583px" width="10" height="10" viewBox="0 0 10 10"><g stroke="#777" stroke-width="1"><line x1="2" y1="9" x2="9" y2="2"/><line x1="6" y1="9" x2="9" y2="6"/></g></svg>
<div class="lbl" style="left:127.5px;top:615.5px;color:#555">优惠率:</div>
<div class="val" style="left:210.5px;top:616.5px;color:#333">0</div>
<div class="ul" style="left:205px;top:636px;width:113px"></div>
<div class="val" style="left:318.5px;top:616.5px;color:#555">%</div>
<div class="lbl" style="left:352px;top:615.5px;color:#555">优惠金额:</div>
<div class="val" style="left:435px;top:616.5px;color:#333">0</div>
<div class="ul" style="left:430px;top:636px;width:113px"></div>
<div class="lbl" style="left:576.5px;top:615.5px;color:#555">优惠后金额:</div>
<div class="val" style="left:660.5px;top:616.5px;color:#999">4200.00</div>
<div class="ul" style="left:655px;top:636px;width:113px"></div>
<div class="lbl" style="left:801.5px;top:615.5px;color:#555">销售附件:</div>
<div class="a" style="left:880px;top:609px;width:51px;height:28px;background:#e2e5e9;color:#505050;font-size:13.1px;line-height:28px;text-align:center;border-radius:2px">上传</div>
<div class="a" style="left:944px;top:609px;width:51px;height:28px;background:#e2e5e9;color:#505050;font-size:13.1px;line-height:28px;text-align:center;border-radius:2px">查看</div>
<div class="lbl" style="left:127.5px;top:652px;color:#555">客户承担费用:</div>
<div class="val" style="left:210.5px;top:653px;color:#333">0</div>
<div class="ul" style="left:205px;top:672px;width:113px"></div>
<div class="lbl" style="left:352px;top:652px;color:#555">结算账户:</div>
<div class="val" style="left:435px;top:653px;color:#333">H01 公-建行</div>
<div class="ul" style="left:430px;top:672px;width:105px"></div>
<div class="dd" style="left:523px;top:657px"></div>
<div class="lbl" style="left:576.5px;top:652px;color:#555">本次收款</div>
<div class="val" style="left:660.5px;top:653px;color:#444">4200</div>
<div class="ul" style="left:655px;top:672px;width:113px"></div>
<div class="lbl" style="left:801.5px;top:652px;color:#555">本次欠款:</div>
<div class="val" style="left:885px;top:653px;color:#999">0.00</div>
<div class="ul" style="left:880px;top:672px;width:113px"></div>
<div class="lbl" style="left:127.5px;top:688.5px;color:#555">开票状态:</div>
<div class="val" style="left:209px;top:689.5px;color:#333">发票已开</div>
<div class="ul" style="left:205px;top:709px;width:113px"></div>
<div class="dd" style="left:306px;top:693.5px"></div>
<div class="lbl" style="left:352px;top:688.5px;color:#555">是否含运费:</div>
<div class="val" style="left:434px;top:689.5px;color:#333">含运费</div>
<div class="ul" style="left:430px;top:709px;width:113px"></div>
<div class="dd" style="left:531px;top:693.5px"></div>
<div class="lbl" style="left:576.5px;top:688.5px;color:#555">结算方式:</div>
<div class="val" style="left:659px;top:689.5px;color:#333">款到发货</div>
<div class="ul" style="left:655px;top:709px;width:105px"></div>
<div class="dd" style="left:748.5px;top:693.5px"></div>
<div class="lbl" style="left:127.5px;top:725px;color:#555">交货方式时间:</div>
<div class="ul" style="left:205px;top:746px;width:329px"></div>
<div class="lbl" style="left:127.5px;top:757.5px;color:#999">制单人:</div>
<div class="val" style="left:205px;top:757.5px;color:#888">张娜</div>
<div class="lbl" style="left:352px;top:757.5px;color:#999">审核人:</div>
<div class="lbl" style="left:576.5px;top:757.5px;color:#999">录单时间:</div>
<div class="val" style="left:655.5px;top:757.5px;color:#888">2024-11-10 09:28:25</div>
<div class="lbl" style="left:801.5px;top:757.5px;color:#999">最后修改时间:</div>
<div class="val" style="left:880.5px;top:757.5px;color:#888">2024-11-14 10:07:48</div>
</body></html>
